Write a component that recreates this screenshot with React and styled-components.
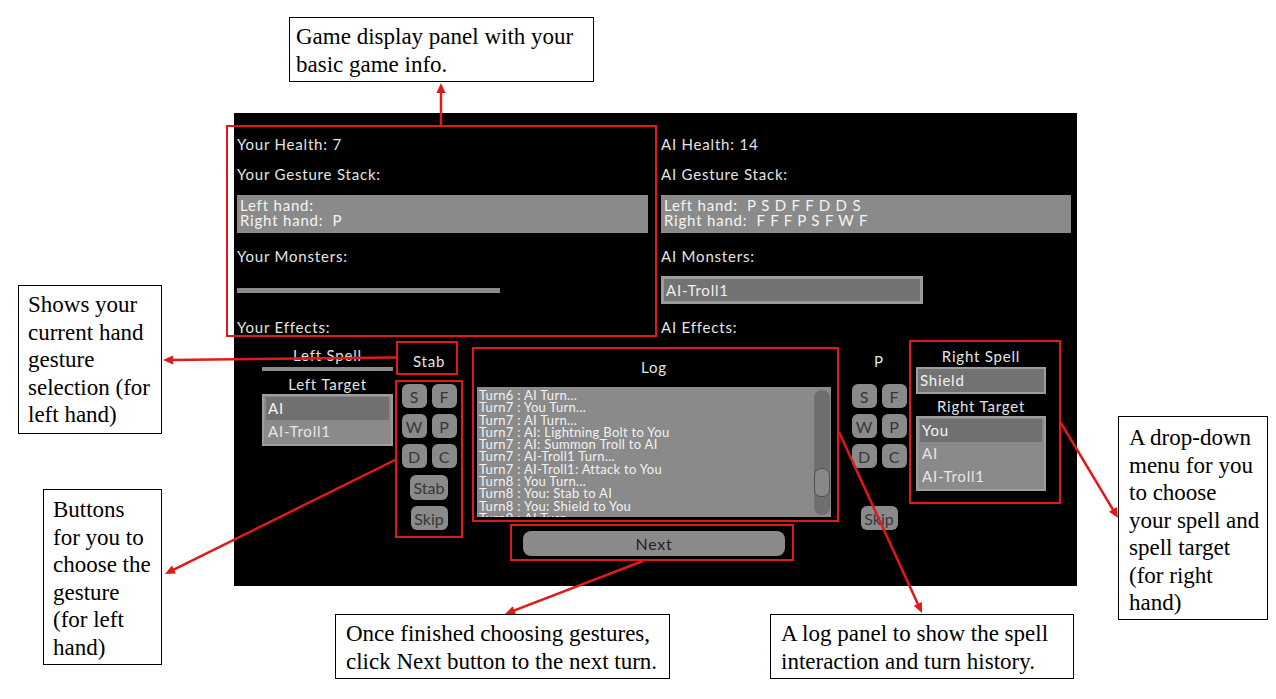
import React from "react";
import styled, { createGlobalStyle } from "styled-components";

const GlobalStyle = createGlobalStyle`
  html, body { margin: 0; padding: 0; background: #ffffff; }
  #root { width: 1276px; height: 699px; }
`;

const RED = "#e01a1a";

const Page = styled.div`
  position: relative;
  width: 1276px;
  height: 699px;
  box-sizing: border-box;
  padding: 113px 0 0 234px;
  overflow: hidden;
  background: #ffffff;
`;

const GamePanel = styled.div`
  width: 843px;
  height: 473px;
  background: #000000;
  color: #e4e4e4;
  font-family: Lato, "DejaVu Sans", sans-serif;
  font-size: 15px;
  letter-spacing: 0.8px;
  display: flex;
  flex-direction: column;
`;

const TopSection = styled.div`
  display: grid;
  grid-template-columns: 411px 410px;
  column-gap: 13px;
  padding: 21px 0 0 3px;
`;

const InfoColumn = styled.div`
  display: flex;
  flex-direction: column;
`;

const InfoLabel = styled.div`
  height: 20px;
  line-height: 20px;
  margin-top: ${(p) => p.$mt || 0}px;
  white-space: nowrap;
`;

const StackBox = styled.div`
  margin-top: 11px;
  height: 38px;
  box-sizing: border-box;
  background: #8a8a8a;
  color: #f4f4f4;
  padding: 3px 3px 0;
  line-height: 14.5px;
  white-space: pre;
`;

const MonsterSlot = styled.div`
  height: 40px;
  display: flex;
  flex-direction: column;
`;

const MonsterBar = styled.div`
  margin-top: 22px;
  width: 263px;
  height: 5px;
  background: #8a8a8a;
`;

const MonsterItem = styled.div`
  margin-top: 10px;
  width: 262px;
  height: 28px;
  box-sizing: border-box;
  border: 3px solid #9c9c9c;
  background: #737373;
  color: #efefef;
  padding-left: 2px;
  line-height: 22px;
`;

const BottomRow = styled.div`
  display: flex;
  align-items: flex-start;
  padding-left: 28px;
`;

const SpellGroup = styled.div`
  width: ${(p) => p.$w}px;
  margin-left: ${(p) => p.$ml || 0}px;
  padding-top: ${(p) => p.$pt}px;
  display: flex;
  flex-direction: column;
  align-items: stretch;
`;

const GroupTitle = styled.div`
  line-height: 18px;
  height: 18px;
  text-align: center;
  margin-top: ${(p) => p.$mt || 0}px;
  white-space: nowrap;
`;

const SpellBar = styled.div`
  margin-top: 3px;
  height: 4px;
  background: #8a8a8a;
`;

const SpellSelect = styled.div`
  margin-top: 2px;
  height: 27px;
  box-sizing: border-box;
  border: 2px solid #9d9d9d;
  background: #737373;
  color: #f2f2f2;
  padding-left: 2px;
  line-height: 23px;
`;

const ChoiceList = styled.div`
  margin-top: 1px;
  border: 2px solid #9d9d9d;
  background: #8a8a8a;
  padding: 1px 2px;
  display: flex;
  flex-direction: column;
`;

const ChoiceItem = styled.div`
  height: 23px;
  line-height: 23px;
  padding-left: 2px;
  background: ${(p) => (p.$selected ? "#707070" : "transparent")};
  color: ${(p) => (p.$selected ? "#f6f6f6" : "#e6e6e6")};
`;

const GestureColumn = styled.div`
  width: 64px;
  margin-left: ${(p) => p.$ml}px;
  padding-top: 15px;
  display: flex;
  flex-direction: column;
  align-items: center;
`;

const HandLabel = styled.div`
  height: 18px;
  line-height: 18px;
  text-align: center;
`;

const GestureGrid = styled.div`
  margin-top: 14px;
  display: grid;
  grid-template-columns: 25px 25px;
  grid-auto-rows: 24px;
  gap: 6px 5px;
`;

const GestureButton = styled.div`
  background: #8a8a8a;
  border-radius: 6px;
  color: #363636;
  font-size: 16px;
  display: flex;
  align-items: center;
  justify-content: center;
  letter-spacing: 0;
  width: ${(p) => p.$w || 25}px;
  height: ${(p) => p.$h || 24}px;
  margin-top: ${(p) => p.$mt || 0}px;
`;

const LogColumn = styled.div`
  width: 354px;
  margin-left: 16px;
  padding-top: 21px;
  display: flex;
  flex-direction: column;
  align-items: center;
`;

const LogBox = styled.div`
  margin-top: 11px;
  width: 100%;
  height: 130px;
  background: #8a8a8a;
  display: flex;
  overflow: hidden;
`;

const LogText = styled.div`
  flex: 1;
  padding: 2px 0 0 2px;
  font-size: 13px;
  line-height: 12.3px;
  letter-spacing: 0.3px;
  color: #f2f2f2;
  white-space: pre;
  overflow: hidden;
`;

const ScrollTrack = styled.div`
  width: 16px;
  margin: 3px 1px 2px 0;
  background: #6f6f6f;
  border-radius: 8px;
  display: flex;
  flex-direction: column;
`;

const ScrollThumb = styled.div`
  margin-top: 78px;
  height: 29px;
  box-sizing: border-box;
  border: 1px solid #505050;
  border-radius: 7px;
  background: #888888;
`;

const NextButton = styled.div`
  margin-top: 14px;
  width: 262px;
  height: 25px;
  border-radius: 8px;
  background: #8a8a8a;
  color: #222222;
  font-size: 16px;
  display: flex;
  align-items: center;
  justify-content: center;
`;

/* Annotation layer */
const Highlight = styled.div`
  position: absolute;
  left: ${(p) => p.$x}px;
  top: ${(p) => p.$y}px;
  width: ${(p) => p.$w}px;
  height: ${(p) => p.$h}px;
  box-sizing: border-box;
  border: 2px solid ${RED};
  pointer-events: none;
`;

const Callout = styled.div`
  position: absolute;
  left: ${(p) => p.$x}px;
  top: ${(p) => p.$y}px;
  width: ${(p) => p.$w}px;
  height: ${(p) => p.$h}px;
  box-sizing: border-box;
  border: 1px solid #000000;
  background: #ffffff;
  padding: ${(p) => p.$pt || 5}px 4px 0 ${(p) => p.$pl || 9}px;
  font-family: "Liberation Serif", "Times New Roman", serif;
  font-size: 23px;
  line-height: ${(p) => p.$lh || 27.5}px;
  color: #000000;
  white-space: nowrap;
`;

const ArrowLayer = styled.svg`
  position: absolute;
  left: 0;
  top: 0;
  width: 1276px;
  height: 699px;
  pointer-events: none;
`;

function Arrow({ x1, y1, x2, y2 }) {
  const dx = x2 - x1;
  const dy = y2 - y1;
  const len = Math.hypot(dx, dy);
  const ux = dx / len;
  const uy = dy / len;
  const head = 10;
  const half = 4.5;
  const bx = x2 - ux * head;
  const by = y2 - uy * head;
  const px = -uy;
  const py = ux;
  const pts = `${x2},${y2} ${bx + px * half},${by + py * half} ${bx - px * half},${by - py * half}`;
  return (
    <g>
      <line x1={x1} y1={y1} x2={bx + ux * 2} y2={by + uy * 2} stroke={RED} strokeWidth="2.5" />
      <polygon points={pts} fill={RED} />
    </g>
  );
}

const logLines = [
  "Turn6 : AI Turn...",
  "Turn7 : You Turn...",
  "Turn7 : AI Turn...",
  "Turn7 : AI: Lightning Bolt to You",
  "Turn7 : AI: Summon Troll to AI",
  "Turn7 : AI-Troll1 Turn...",
  "Turn7 : AI-Troll1: Attack to You",
  "Turn8 : You Turn...",
  "Turn8 : You: Stab to AI",
  "Turn8 : You: Shield to You",
  "Turn9 : AI Turn...",
];

const gestures = ["S", "F", "W", "P", "D", "C"];

function GestureButtons({ ml, label, showStab }) {
  return (
    <GestureColumn $ml={ml}>
      <HandLabel>{label}</HandLabel>
      <GestureGrid>
        {gestures.map((g) => (
          <GestureButton key={g}>{g}</GestureButton>
        ))}
      </GestureGrid>
      {showStab && (
        <GestureButton $w={38} $h={25} $mt={7}>
          Stab
        </GestureButton>
      )}
      <GestureButton $w={37} $h={24} $mt={showStab ? 6 : 38}>
        Skip
      </GestureButton>
    </GestureColumn>
  );
}

export default function App() {
  return (
    <>
      <GlobalStyle />
      <Page>
        <GamePanel>
          <TopSection>
            <InfoColumn>
              <InfoLabel>Your Health: 7</InfoLabel>
              <InfoLabel $mt={10}>Your Gesture Stack:</InfoLabel>
              <StackBox>{"Left hand:\nRight hand:  P"}</StackBox>
              <InfoLabel $mt={13}>Your Monsters:</InfoLabel>
              <MonsterSlot>
                <MonsterBar />
              </MonsterSlot>
              <InfoLabel $mt={11}>Your Effects:</InfoLabel>
            </InfoColumn>
            <InfoColumn>
              <InfoLabel>AI Health: 14</InfoLabel>
              <InfoLabel $mt={10}>AI Gesture Stack:</InfoLabel>
              <StackBox>{"Left hand:  P S D F F D D S\nRight hand:  F F F P S F W F"}</StackBox>
              <InfoLabel $mt={13}>AI Monsters:</InfoLabel>
              <MonsterSlot>
                <MonsterItem>AI-Troll1</MonsterItem>
              </MonsterSlot>
              <InfoLabel $mt={11}>AI Effects:</InfoLabel>
            </InfoColumn>
          </TopSection>

          <BottomRow>
            <SpellGroup $w={131} $pt={9}>
              <GroupTitle>Left Spell</GroupTitle>
              <SpellBar />
              <GroupTitle $mt={4}>Left Target</GroupTitle>
              <ChoiceList>
                <ChoiceItem $selected>AI</ChoiceItem>
                <ChoiceItem>AI-Troll1</ChoiceItem>
              </ChoiceList>
            </SpellGroup>

            <GestureButtons ml={4} label="Stab" showStab />

            <LogColumn>
              <GroupTitle>Log</GroupTitle>
              <LogBox>
                <LogText>{logLines.join("\n")}</LogText>
                <ScrollTrack>
                  <ScrollThumb />
                </ScrollTrack>
              </LogBox>
              <NextButton>Next</NextButton>
            </LogColumn>

            <GestureButtons ml={16} label="P" />

            <SpellGroup $w={130} $ml={5} $pt={10}>
              <GroupTitle>Right Spell</GroupTitle>
              <SpellSelect>Shield</SpellSelect>
              <GroupTitle $mt={3}>Right Target</GroupTitle>
              <ChoiceList>
                <ChoiceItem $selected>You</ChoiceItem>
                <ChoiceItem>AI</ChoiceItem>
                <ChoiceItem>AI-Troll1</ChoiceItem>
              </ChoiceList>
            </SpellGroup>
          </BottomRow>
        </GamePanel>

        <Highlight $x={226} $y={125} $w={431} $h={212} />
        <Highlight $x={396} $y={341} $w={62} $h={34} />
        <Highlight $x={395} $y={380} $w={68} $h={158} />
        <Highlight $x={472} $y={347} $w={367} $h={175} />
        <Highlight $x={510} $y={524} $w={284} $h={37} />
        <Highlight $x={909} $y={340} $w={152} $h={164} />

        <ArrowLayer viewBox="0 0 1276 699">
          <Arrow x1={441} y1={125} x2={441} y2={83} />
          <Arrow x1={396} y1={357.5} x2={163} y2={360} />
          <Arrow x1={397} y1={459} x2={165} y2={574} />
          <Arrow x1={839} y1={432} x2={922} y2={613} />
          <Arrow x1={643} y1={561} x2={505} y2={614} />
          <Arrow x1={1061} y1={423} x2={1118} y2={518} />
        </ArrowLayer>

        <Callout $x={289} $y={17} $w={305} $h={65} $pl={6} $lh={28}>
          Game display panel with your
          <br />
          basic game info.
        </Callout>
        <Callout $x={18} $y={285} $w={144} $h={149}>
          Shows your
          <br />
          current hand
          <br />
          gesture
          <br />
          selection (for
          <br />
          left hand)
        </Callout>
        <Callout $x={43} $y={489} $w={119} $h={176} $pt={6}>
          Buttons
          <br />
          for you to
          <br />
          choose the
          <br />
          gesture
          <br />
          (for left
          <br />
          hand)
        </Callout>
        <Callout $x={335} $y={614} $w={335} $h={65} $pl={10} $lh={28}>
          Once finished choosing gestures,
          <br />
          click Next button to the next turn.
        </Callout>
        <Callout $x={770} $y={614} $w={304} $h={65} $pl={10} $lh={28}>
          A log panel to show the spell
          <br />
          interaction and turn history.
        </Callout>
        <Callout $x={1118} $y={416} $w={150} $h={204} $pl={10} $pt={7}>
          A drop-down
          <br />
          menu for you
          <br />
          to choose
          <br />
          your spell and
          <br />
          spell target
          <br />
          (for right
          <br />
          hand)
        </Callout>
      </Page>
    </>
  );
}
